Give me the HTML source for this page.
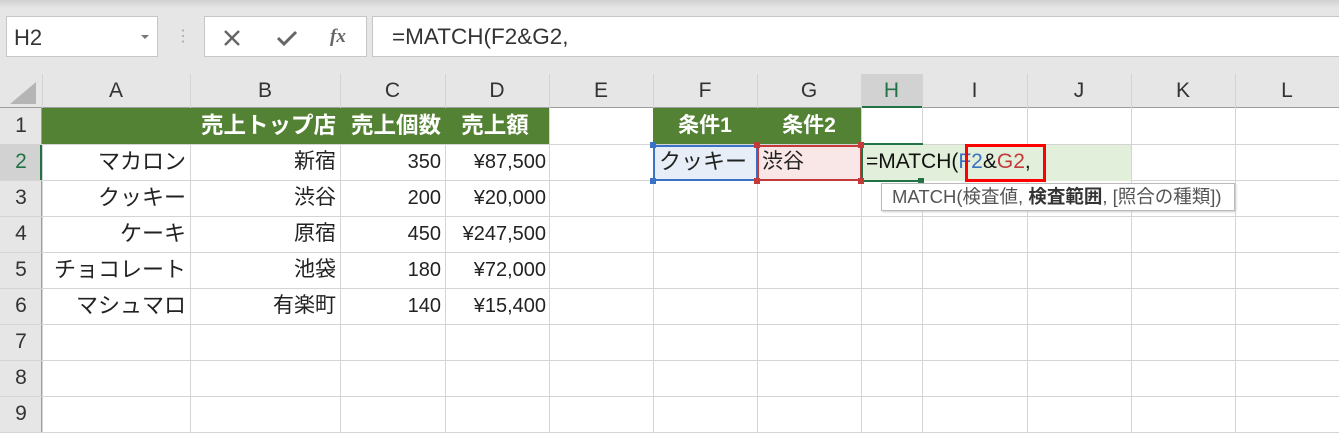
<!DOCTYPE html>
<html><head><meta charset="utf-8"><style>
body{margin:0;width:1339px;height:433px;overflow:hidden;background:#fff;font-family:"Liberation Sans","Noto Sans CJK JP",sans-serif;position:relative}
.a{position:absolute;box-sizing:border-box}
.t{position:absolute;font-size:20px;line-height:36px;white-space:nowrap;color:#222}
.j{font-size:21px}
.h{position:absolute;font-size:21px;line-height:34px;text-align:center;color:#333;top:74px}
</style></head><body>
<div class="a" style="left:0;top:0;width:1339px;height:74px;background:#e6e6e6"></div>
<div class="a" style="left:0;top:0;width:1339px;height:8px;background:linear-gradient(#d0d0d0,#e6e6e6)"></div>
<div class="a" style="left:6px;top:16px;width:152px;height:41px;background:#fff;border:1px solid #c6c6c6"></div>
<div class="t" style="left:14px;top:20px;font-size:22px;color:#333">H2</div>
<div class="a" style="left:141px;top:35px;border-left:4px solid transparent;border-right:4px solid transparent;border-top:4px solid #777"></div>
<div class="t" style="left:175px;top:19px;color:#aaa;font-size:16px">⋮</div>
<div class="a" style="left:204px;top:16px;width:163px;height:41px;background:#fff;border:1px solid #c6c6c6"></div>
<svg class="a" style="left:222px;top:28px" width="20" height="20"><path d="M3 3L17 17M17 3L3 17" stroke="#666" stroke-width="2.4"/></svg>
<svg class="a" style="left:275px;top:28px" width="24" height="20"><path d="M3 10L9 16L21 4" stroke="#666" stroke-width="3" fill="none"/></svg>
<div class="t" style="left:330px;top:19px;font-family:'Liberation Serif',serif;font-style:italic;font-weight:bold;color:#666;font-size:19px">fx</div>
<div class="a" style="left:372px;top:16px;width:970px;height:41px;background:#fff;border:1px solid #c6c6c6"></div>
<div class="t" style="left:392px;top:19px;font-size:22.5px;color:#333">=MATCH(F2&amp;G2,</div>
<div class="a" style="left:0;top:74px;width:1339px;height:34px;background:#e6e6e6;border-bottom:1px solid #9e9e9e"></div>
<div class="a" style="left:0;top:108px;width:42px;height:325px;background:#e6e6e6;border-right:1px solid #9e9e9e"></div>
<div class="a" style="left:10px;top:82px;width:0;height:0;border-left:26px solid transparent;border-bottom:22px solid #b5b5b5"></div>
<div class="a" style="left:861px;top:74px;width:62px;height:34px;background:#d2d2d2;border-bottom:2px solid #217346"></div>
<div class="a" style="left:0;top:144px;width:42px;height:36px;background:#d2d2d2;border-right:2px solid #217346"></div>
<svg class="a" style="left:0;top:74px" width="1339" height="359">
<g stroke="#d4d4d4" stroke-width="1">
<path d="M42.5 0V359M190.5 0V359M340.5 0V359M445.5 0V359M549.5 0V359M653.5 0V359M757.5 0V359M861.5 0V359M922.5 0V359M1027.5 0V359M1131.5 0V359M1235.5 0V359"/>
<path d="M0 70.5H1339M0 106.5H1339M0 142.5H1339M0 178.5H1339M0 214.5H1339M0 250.5H1339M0 286.5H1339M0 322.5H1339M0 358.5H1339"/>
</g></svg>
<div class="h" style="left:42px;width:148px">A</div><div class="h" style="left:190px;width:150px">B</div><div class="h" style="left:340px;width:105px">C</div><div class="h" style="left:445px;width:104px">D</div><div class="h" style="left:549px;width:104px">E</div><div class="h" style="left:653px;width:104px">F</div><div class="h" style="left:757px;width:104px">G</div><div class="h" style="left:861px;width:61px;color:#217346">H</div><div class="h" style="left:922px;width:105px">I</div><div class="h" style="left:1027px;width:104px">J</div><div class="h" style="left:1131px;width:104px">K</div><div class="h" style="left:1235px;width:104px">L</div>
<div class="t j" style="left:0;width:42px;text-align:center;top:108px;color:#333">1</div>
<div class="t j" style="left:0;width:42px;text-align:center;top:144px;color:#217346">2</div>
<div class="t j" style="left:0;width:42px;text-align:center;top:180px;color:#333">3</div>
<div class="t j" style="left:0;width:42px;text-align:center;top:216px;color:#333">4</div>
<div class="t j" style="left:0;width:42px;text-align:center;top:252px;color:#333">5</div>
<div class="t j" style="left:0;width:42px;text-align:center;top:288px;color:#333">6</div>
<div class="t j" style="left:0;width:42px;text-align:center;top:324px;color:#333">7</div>
<div class="t j" style="left:0;width:42px;text-align:center;top:360px;color:#333">8</div>
<div class="t j" style="left:0;width:42px;text-align:center;top:396px;color:#333">9</div>
<div class="a" style="left:42px;top:108px;width:507px;height:36px;background:#548235"></div>
<div class="t" style="left:190px;width:146px;text-align:right;top:108px;color:#fff;font-weight:bold;font-size:22.5px">売上トップ店</div>
<div class="t" style="left:340px;width:101px;text-align:right;top:108px;color:#fff;font-weight:bold;font-size:22.5px">売上個数</div>
<div class="t" style="left:445px;width:100px;text-align:center;top:108px;color:#fff;font-weight:bold;font-size:22.5px">売上額</div>
<div class="a" style="left:653px;top:108px;width:208px;height:36px;background:#548235"></div>
<div class="t" style="left:653px;width:104px;text-align:center;top:108px;color:#fff;font-weight:bold;font-size:21px">条件1</div>
<div class="t" style="left:757px;width:104px;text-align:center;top:108px;color:#fff;font-weight:bold;font-size:21px">条件2</div>
<div class="t j" style="left:42px;width:144px;text-align:right;top:144px;font-size:22px">マカロン</div>
<div class="t j" style="left:42px;width:144px;text-align:right;top:180px;font-size:22px">クッキー</div>
<div class="t j" style="left:42px;width:144px;text-align:right;top:216px;font-size:22px">ケーキ</div>
<div class="t j" style="left:42px;width:144px;text-align:right;top:252px;font-size:22px">チョコレート</div>
<div class="t j" style="left:42px;width:144px;text-align:right;top:288px;font-size:22px">マシュマロ</div>
<div class="t j" style="left:190px;width:146px;text-align:right;top:144px">新宿</div>
<div class="t j" style="left:190px;width:146px;text-align:right;top:180px">渋谷</div>
<div class="t j" style="left:190px;width:146px;text-align:right;top:216px">原宿</div>
<div class="t j" style="left:190px;width:146px;text-align:right;top:252px">池袋</div>
<div class="t j" style="left:190px;width:146px;text-align:right;top:288px">有楽町</div>
<div class="t" style="left:340px;width:101px;text-align:right;top:144px">350</div>
<div class="t" style="left:340px;width:101px;text-align:right;top:180px">200</div>
<div class="t" style="left:340px;width:101px;text-align:right;top:216px">450</div>
<div class="t" style="left:340px;width:101px;text-align:right;top:252px">180</div>
<div class="t" style="left:340px;width:101px;text-align:right;top:288px">140</div>
<div class="t" style="left:445px;width:101px;text-align:right;top:144px">¥87,500</div>
<div class="t" style="left:445px;width:101px;text-align:right;top:180px">¥20,000</div>
<div class="t" style="left:445px;width:101px;text-align:right;top:216px">¥247,500</div>
<div class="t" style="left:445px;width:101px;text-align:right;top:252px">¥72,000</div>
<div class="t" style="left:445px;width:101px;text-align:right;top:288px">¥15,400</div>
<div class="a" style="left:653px;top:145px;width:105px;height:36px;background:#e8eef8;border:2px solid #3a72c4"></div>
<div class="a" style="left:757px;top:145px;width:105px;height:36px;background:#f9e6e6;border:2px solid #c43a3a"></div>
<div class="a" style="left:861px;top:145px;width:270px;height:36px;background:#e2efda"></div>
<div class="a" style="left:861px;top:143px;width:62px;height:39px;border:2px solid #217346;border-right:none;background:transparent"></div>
<div class="a" style="left:650px;top:142px;width:6px;height:6px;background:#3a72c4"></div>
<div class="a" style="left:650px;top:178px;width:6px;height:6px;background:#3a72c4"></div>
<div class="a" style="left:754px;top:142px;width:6px;height:6px;background:#c43a3a"></div>
<div class="a" style="left:754px;top:178px;width:6px;height:6px;background:#c43a3a"></div>
<div class="a" style="left:858px;top:142px;width:6px;height:6px;background:#c43a3a"></div>
<div class="a" style="left:858px;top:178px;width:6px;height:6px;background:#c43a3a"></div>
<div class="a" style="left:918px;top:178px;width:6px;height:6px;background:#217346"></div>
<div class="t j" style="left:659px;top:144px;font-size:22px">クッキー</div>
<div class="t j" style="left:762px;top:144px">渋谷</div>
<div class="t" style="left:866px;top:144px;font-size:21px;color:#111">=MATCH(<span style="color:#3a72c4">F2</span>&amp;<span style="color:#c43a3a">G2</span>,</div>
<div class="a" style="left:965px;top:144px;width:81px;height:38px;border:3px solid #f00"></div>
<div class="a" style="left:881px;top:183px;width:354px;height:28px;background:#fff;border:1px solid #bbb;box-shadow:1px 1px 2px #ccc"></div>
<div class="t" style="left:892px;top:183px;font-size:18.5px;line-height:28px;color:#555">MATCH(検査値, <b style="color:#333">検査範囲</b>, [照合の種類])</div>
</body></html>
